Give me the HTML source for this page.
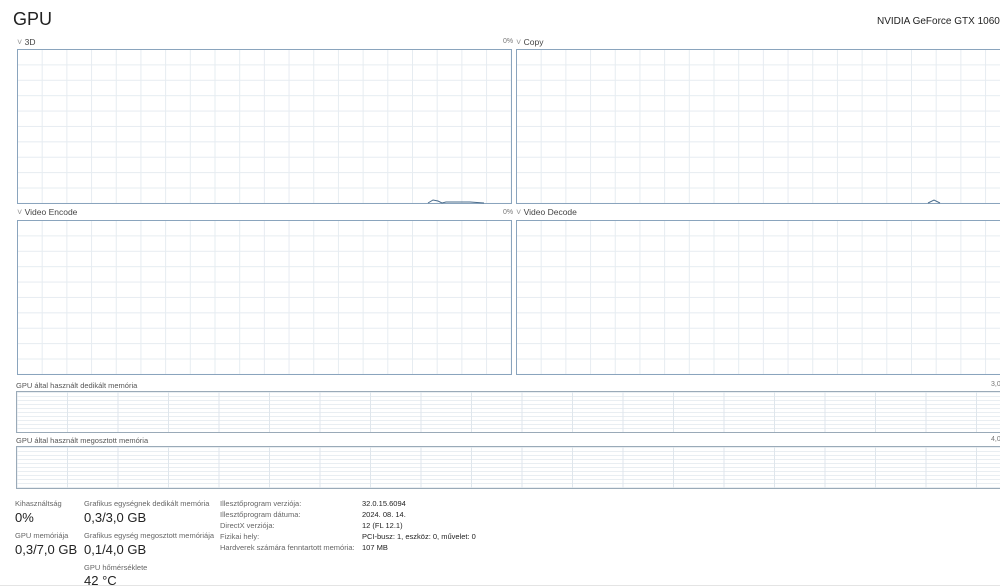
<!DOCTYPE html>
<html><head><meta charset="utf-8"><style>
body{margin:0;width:1000px;height:587px;background:#fff;overflow:hidden;position:relative;font-family:"Segoe UI","Liberation Sans",sans-serif;color:#222}
.a{position:absolute;white-space:nowrap}
.box{position:absolute;border:1px solid #8aa4bd;box-sizing:border-box;
background-color:#fff;
background-image:linear-gradient(to right,#e6ecf1 1px,transparent 1px),linear-gradient(to bottom,#e6ecf1 1px,transparent 1px);
background-size:24.7px 100%,100% 15.4px;background-position:-1px 0,0 -1px}
.mem{background-image:linear-gradient(to right,#dfe6ec 1px,transparent 1px),linear-gradient(to bottom,#e9eef2 1px,transparent 1px);
background-size:50.5px 100%,100% 4px;background-position:50px 0,0 0;border-color:#9aaab8}
.lbl{font-size:8.5px;color:#444}
.pc{font-size:7px;color:#777}
.sl{font-size:7.5px;color:#666}
.sv{font-size:13px;color:#222}
.il{font-size:7.5px;color:#666}
.iv{font-size:7.5px;color:#222}
.ch{color:#999;font-size:9px}
</style></head><body>
<div class="a" style="left:13px;top:9px;font-size:18px;color:#222">GPU</div>
<div class="a" style="left:877px;top:16px;font-size:10px;color:#222">NVIDIA GeForce GTX 1060 3</div>

<div class="a lbl" style="left:17px;top:37px"><span class="ch">˅</span> 3D</div>
<div class="a pc" style="left:503px;top:38px">0%</div>
<div class="a lbl" style="left:516px;top:37px"><span class="ch">˅</span> Copy</div>
<div class="box" style="left:17px;top:49px;width:495px;height:155px"></div>
<div class="box" style="left:516px;top:49px;width:500px;height:155px"></div>
<svg class="a" style="left:0;top:0" width="1000" height="587"><path d="M428 203 L433 200 L438 201 L442 203 L446 202 L470 202 L484 203" stroke="#4a6c8c" fill="none" stroke-width="1"/><path d="M928 203 L934 200 L940 203" stroke="#4a6c8c" fill="none" stroke-width="1"/><path d="M845 432 L855 430 L900 429 L1000 429" stroke="#4a6c8c" fill="none" stroke-width="1"/></svg>

<div class="a lbl" style="left:17px;top:207px"><span class="ch">˅</span> Video Encode</div>
<div class="a pc" style="left:503px;top:209px">0%</div>
<div class="a lbl" style="left:516px;top:207px"><span class="ch">˅</span> Video Decode</div>
<div class="box" style="left:17px;top:220px;width:495px;height:155px"></div>
<div class="box" style="left:516px;top:220px;width:500px;height:155px"></div>

<div class="a lbl" style="left:16px;top:381px;font-size:7.5px;color:#555">GPU által használt dedikált memória</div>
<div class="a pc" style="left:991px;top:381px">3,0</div>
<div class="box mem" style="left:16px;top:391px;width:1000px;height:42px"></div>
<div class="a lbl" style="left:16px;top:436px;font-size:7.5px;color:#555">GPU által használt megosztott memória</div>
<div class="a pc" style="left:991px;top:436px">4,0</div>
<div class="box mem" style="left:16px;top:446px;width:1000px;height:43px"></div>

<div class="a sl" style="left:15px;top:499px">Kihasználtság</div>
<div class="a sv" style="left:15px;top:510px">0%</div>
<div class="a sl" style="left:15px;top:531px">GPU memóriája</div>
<div class="a sv" style="left:15px;top:542px">0,3/7,0 GB</div>
<div class="a sl" style="left:84px;top:499px">Grafikus egységnek dedikált memória</div>
<div class="a sv" style="left:84px;top:510px">0,3/3,0 GB</div>
<div class="a sl" style="left:84px;top:531px">Grafikus egység megosztott memóriája</div>
<div class="a sv" style="left:84px;top:542px">0,1/4,0 GB</div>
<div class="a sl" style="left:84px;top:563px">GPU hőmérséklete</div>
<div class="a sv" style="left:84px;top:573px">42 °C</div>

<div class="a il" style="left:220px;top:499px">Illesztőprogram verziója:</div>
<div class="a il" style="left:220px;top:510px">Illesztőprogram dátuma:</div>
<div class="a il" style="left:220px;top:521px">DirectX verziója:</div>
<div class="a il" style="left:220px;top:532px">Fizikai hely:</div>
<div class="a il" style="left:220px;top:543px">Hardverek számára fenntartott memória:</div>
<div class="a iv" style="left:362px;top:499px">32.0.15.6094</div>
<div class="a iv" style="left:362px;top:510px">2024. 08. 14.</div>
<div class="a iv" style="left:362px;top:521px">12 (FL 12.1)</div>
<div class="a iv" style="left:362px;top:532px">PCI-busz: 1, eszköz: 0, művelet: 0</div>
<div class="a iv" style="left:362px;top:543px">107 MB</div>
<div class="a" style="left:0;top:585px;width:1000px;height:1px;background:#e4e4e4"></div>
</body></html>
